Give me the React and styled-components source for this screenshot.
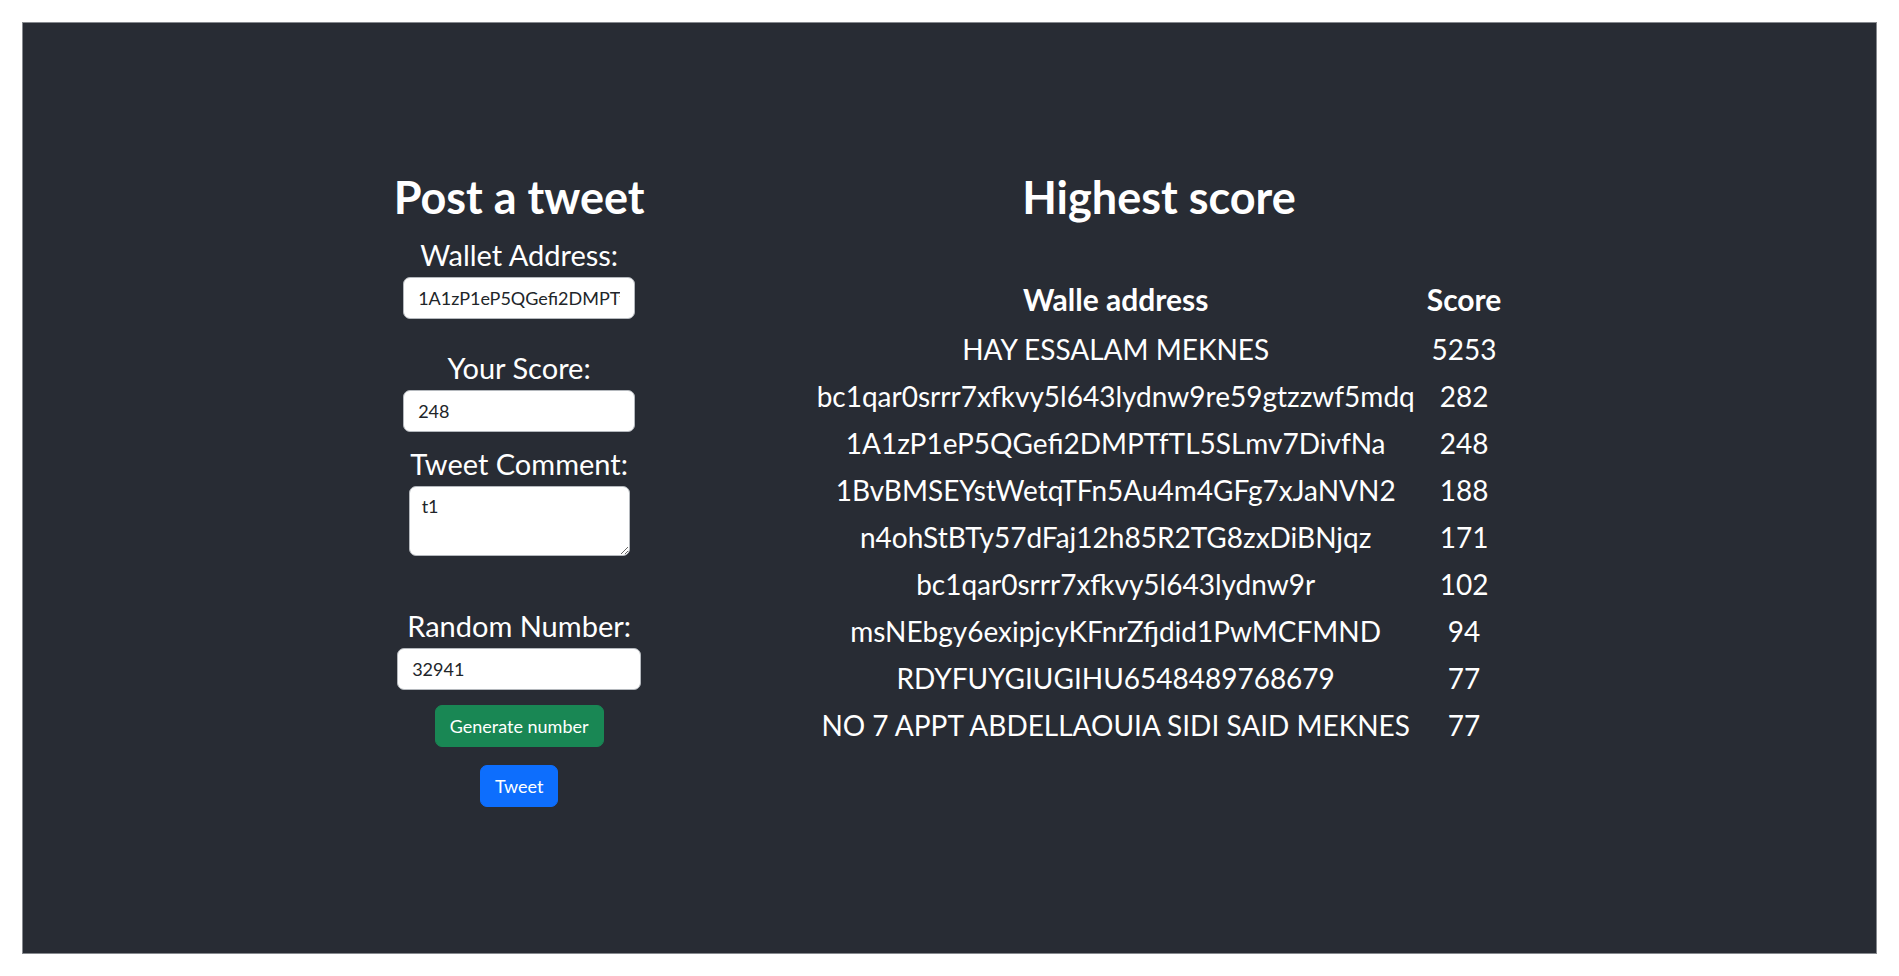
import React, { useState } from "react";
import styled, { createGlobalStyle } from "styled-components";

const GlobalStyle = createGlobalStyle`
  html, body {
    margin: 0;
    padding: 0;
    background: #ffffff;
  }
  body {
    font-family: Lato, "Liberation Sans", sans-serif;
  }
  * {
    box-sizing: border-box;
  }
`;

const scores = [
  { address: "HAY ESSALAM MEKNES", score: 5253 },
  { address: "bc1qar0srrr7xfkvy5l643lydnw9re59gtzzwf5mdq", score: 282 },
  { address: "1A1zP1eP5QGefi2DMPTfTL5SLmv7DivfNa", score: 248 },
  { address: "1BvBMSEYstWetqTFn5Au4m4GFg7xJaNVN2", score: 188 },
  { address: "n4ohStBTy57dFaj12h85R2TG8zxDiBNjqz", score: 171 },
  { address: "bc1qar0srrr7xfkvy5l643lydnw9r", score: 102 },
  { address: "msNEbgy6exipjcyKFnrZfjdid1PwMCFMND", score: 94 },
  { address: "RDYFUYGIUGIHU6548489768679", score: 77 },
  { address: "NO 7 APPT ABDELLAOUIA SIDI SAID MEKNES", score: 77 },
];

export default function App() {
  const [wallet, setWallet] = useState("1A1zP1eP5QGefi2DMPTfTL5SLmv7DivfNa");
  const [score, setScore] = useState("248");
  const [comment, setComment] = useState("t1");
  const [random, setRandom] = useState("32941");

  function generate() {
    setRandom(String(Math.floor(Math.random() * 100000)));
  }

  return (
    <Page>
      <GlobalStyle />
      <Panel>
        <Columns>
          <FormColumn>
            <Title>Post a tweet</Title>
            <Label $top={14}>Wallet Address:</Label>
            <Field
              $width={232}
              value={wallet}
              onChange={(e) => setWallet(e.target.value)}
            />
            <Label $top={32}>Your Score:</Label>
            <Field
              $width={232}
              value={score}
              onChange={(e) => setScore(e.target.value)}
            />
            <Label $top={15}>Tweet Comment:</Label>
            <Comment
              value={comment}
              onChange={(e) => setComment(e.target.value)}
            />
            <Label $top={53}>Random Number:</Label>
            <Field
              $width={244}
              value={random}
              onChange={(e) => setRandom(e.target.value)}
            />
            <Button $color="#198754" $top={15} onClick={generate}>
              Generate number
            </Button>
            <Button $color="#0d6efd" $top={18}>
              Tweet
            </Button>
          </FormColumn>

          <ScoreColumn>
            <Title>Highest score</Title>
            <Table>
              <thead>
                <tr>
                  <Head>Walle address</Head>
                  <Head>Score</Head>
                </tr>
              </thead>
              <tbody>
                {scores.map((row, index) => (
                  <tr key={index}>
                    <Cell>{row.address}</Cell>
                    <Cell>{row.score}</Cell>
                  </tr>
                ))}
              </tbody>
            </Table>
          </ScoreColumn>
        </Columns>
      </Panel>
    </Page>
  );
}

const Page = styled.div`
  padding: 22px;
  height: 100vh;
`;

const Panel = styled.main`
  height: 100%;
  background: #282c34;
  border: 1px solid #86898e;
  display: flex;
  align-items: center;
  justify-content: center;
  color: #ffffff;
`;

const Columns = styled.div`
  display: flex;
  align-items: flex-start;
  gap: 168px;
  margin-left: 4px;
`;

const FormColumn = styled.section`
  width: 247px;
  display: flex;
  flex-direction: column;
  align-items: center;
`;

const ScoreColumn = styled.section`
  display: flex;
  flex-direction: column;
  align-items: center;
`;

const Title = styled.h1`
  margin: 0;
  font-size: 45px;
  line-height: 54px;
  font-weight: 700;
  white-space: nowrap;
`;

const Label = styled.h3`
  margin: ${(p) => p.$top}px 0 5px;
  font-size: 29px;
  line-height: 34px;
  font-weight: 400;
  white-space: nowrap;
`;

const Field = styled.input`
  width: ${(p) => p.$width}px;
  height: 42px;
  padding: 6px 14px;
  font-family: inherit;
  font-size: 18px;
  color: #212529;
  background: #ffffff;
  border: 1px solid #b4b8bd;
  border-radius: 7px;
  outline: none;
`;

const Comment = styled.textarea`
  width: 221px;
  height: 70px;
  padding: 6px 12px;
  font-family: inherit;
  font-size: 18px;
  line-height: 1.5;
  color: #212529;
  background: #ffffff;
  border: 1px solid #b4b8bd;
  border-radius: 7px;
  outline: none;
`;

const Button = styled.button`
  margin-top: ${(p) => p.$top}px;
  height: 42px;
  padding: 0 14px;
  font-family: inherit;
  font-size: 18px;
  color: #ffffff;
  background: ${(p) => p.$color};
  border: 1px solid ${(p) => p.$color};
  border-radius: 7px;
  cursor: pointer;
`;

const Table = styled.table`
  margin-top: 52px;
  border-collapse: collapse;
  font-size: 28px;
`;

const Head = styled.th`
  height: 47px;
  padding: 0 6px;
  font-size: 30px;
  font-weight: 700;
  text-align: center;
`;

const Cell = styled.td`
  height: 47px;
  padding: 5px 6px 0;
  text-align: center;
  white-space: nowrap;
`;
